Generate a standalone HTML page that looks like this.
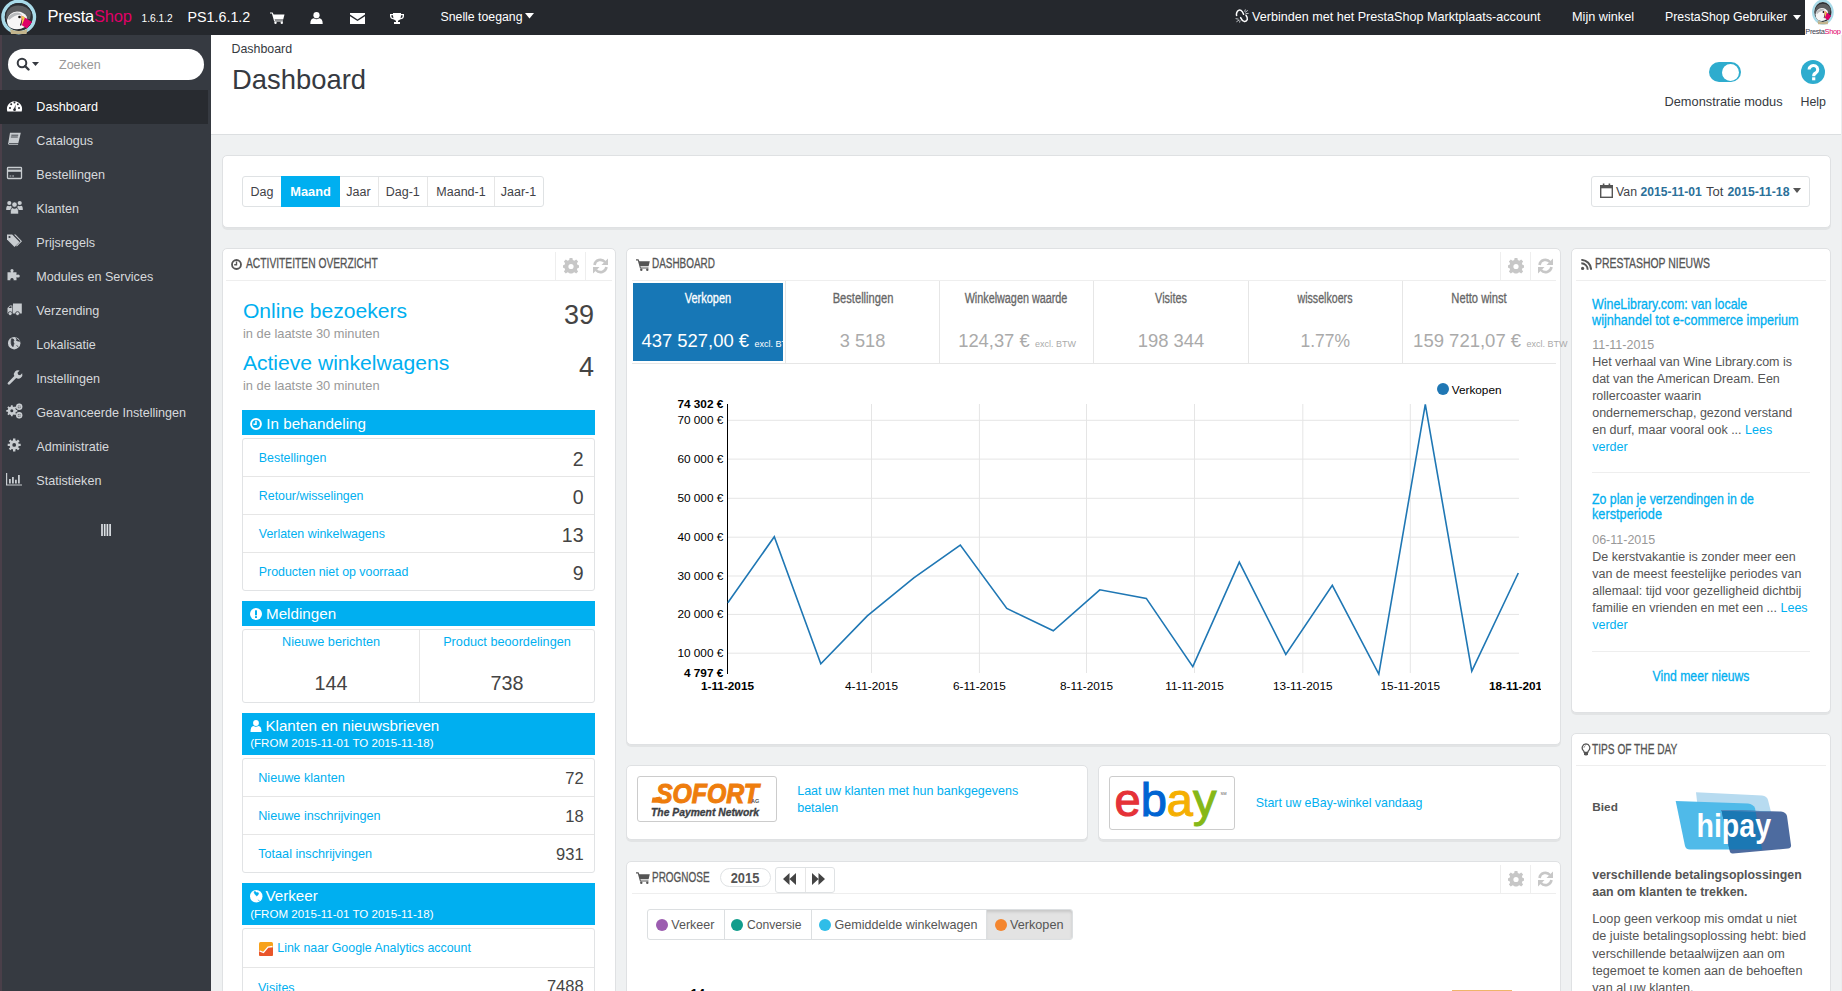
<!DOCTYPE html><html><head><meta charset="utf-8"><title>Dashboard</title><style>*{margin:0;padding:0}
html,body{width:1842px;height:991px;overflow:hidden;background:#eff1f2;font-family:"Liberation Sans", sans-serif;position:relative}
.t{position:absolute;white-space:nowrap}
.b{position:absolute}
</style></head><body>
<div class="b" style="left:0px;top:35px;width:211px;height:956px;background:#363a41;"></div>
<div class="b" style="left:0px;top:35px;width:2px;height:956px;background:#4a3f49;"></div>
<div class="b" style="left:8px;top:49px;width:196px;height:31px;background:#fff;border-radius:16px;"></div>
<svg class="b" style="left:16px;top:57px" width="26" height="14" viewBox="0 0 26 14"><circle cx="6" cy="6" r="4.3" stroke="#363a41" stroke-width="2" fill="none"/><path d="M9 9 L12.5 12.5" stroke="#363a41" stroke-width="2.4" stroke-linecap="round"/><path d="M16 5 H23 L19.5 9Z" fill="#363a41"/></svg>
<div class="t" style="top:57.00px;font-size:12.5px;line-height:16px;color:#999;left:59px;">Zoeken</div>
<div class="b" style="left:0px;top:90px;width:208px;height:34px;background:#282b30;"></div>
<div class="t" style="top:99.00px;font-size:12.6px;line-height:16px;color:#fff;left:36.3px;">Dashboard</div>
<div class="t" style="top:133.00px;font-size:12.6px;line-height:16px;color:#d6d9dc;left:36.3px;">Catalogus</div>
<div class="t" style="top:167.00px;font-size:12.6px;line-height:16px;color:#d6d9dc;left:36.3px;">Bestellingen</div>
<div class="t" style="top:201.00px;font-size:12.6px;line-height:16px;color:#d6d9dc;left:36.3px;">Klanten</div>
<div class="t" style="top:235.00px;font-size:12.6px;line-height:16px;color:#d6d9dc;left:36.3px;">Prijsregels</div>
<div class="t" style="top:269.00px;font-size:12.6px;line-height:16px;color:#d6d9dc;left:36.3px;">Modules en Services</div>
<div class="t" style="top:303.00px;font-size:12.6px;line-height:16px;color:#d6d9dc;left:36.3px;">Verzending</div>
<div class="t" style="top:337.00px;font-size:12.6px;line-height:16px;color:#d6d9dc;left:36.3px;">Lokalisatie</div>
<div class="t" style="top:371.00px;font-size:12.6px;line-height:16px;color:#d6d9dc;left:36.3px;">Instellingen</div>
<div class="t" style="top:405.00px;font-size:12.6px;line-height:16px;color:#d6d9dc;left:36.3px;">Geavanceerde Instellingen</div>
<div class="t" style="top:439.00px;font-size:12.6px;line-height:16px;color:#d6d9dc;left:36.3px;">Administratie</div>
<div class="t" style="top:473.00px;font-size:12.6px;line-height:16px;color:#d6d9dc;left:36.3px;">Statistieken</div>
<svg class="b" style="left:0;top:90px" width="30" height="410" viewBox="0 0 30 410" fill="#c8ccd0">
<g>
<path d="M7.3 21.4 A7.6 7.6 0 1 1 21.7 21.4Z" fill="#fff"/>
<circle cx="10" cy="18" r="1" fill="#282b30"/><circle cx="11.2" cy="14.2" r="1" fill="#282b30"/><circle cx="14.5" cy="12.6" r="1" fill="#282b30"/><circle cx="17.8" cy="14.2" r="1" fill="#282b30"/><circle cx="19" cy="18" r="1" fill="#282b30"/>
<path d="M13.6 20 L15.6 14.5 L15.4 20.5Z" fill="#282b30"/><circle cx="14.5" cy="19.8" r="1.3" fill="#282b30"/>
</g>
<g transform="translate(0,34)">
<path d="M10 8.8 H20.8 L18.3 19.2 H9.2 Q8.2 19.2 8.4 18.2Z"/>
<path d="M8 18.6 Q7.6 20.8 9.3 20.8 H18 L18.2 20 H9.4 Q8.7 20 8.9 19Z"/>
<path d="M11.3 11.2 H18.2 M10.9 13 H17.8" stroke="#363a41" stroke-width="0.9"/>
</g>
<g transform="translate(0,68)">
<rect x="7.5" y="9.5" width="14" height="11" rx="0.8" fill="none" stroke="#c8ccd0" stroke-width="1.3"/><rect x="7.5" y="11.6" width="14" height="2.2"/><path d="M9.5 18 H11.3 M12.2 18 H14" stroke="#c8ccd0" stroke-width="0.9"/>
</g>
<g transform="translate(0,102)">
<circle cx="9.3" cy="11" r="2.1"/><circle cx="19.7" cy="11" r="2.1"/>
<path d="M6.2 18 Q6 13.8 8 13.7 Q9.3 14.6 10.6 13.7 L12 15 Q10.8 16 10.6 18Z M22.8 18 Q23 13.8 21 13.7 Q19.7 14.6 18.4 13.7 L17 15 Q18.2 16 18.4 18Z"/>
<circle cx="14.5" cy="12.6" r="2.6" stroke="#363a41" stroke-width="0.6"/>
<path d="M10.5 22 Q10.3 16 12.3 15.8 Q14.5 17.3 16.7 15.8 Q18.7 16 18.5 22Z" stroke="#363a41" stroke-width="0.6"/>
</g>
<g transform="translate(0,136)">
<path d="M7 8.6 H12.2 L19.5 15.9 L14.5 20.9 L7 13.5Z"/><circle cx="9.5" cy="11" r="1.1" fill="#363a41"/>
<path d="M14 8.6 H15.5 L22 15.2 L16.8 20.5 L16.1 19.8 L20.6 15.2Z"/>
</g>
<g transform="translate(0,170)">
<path d="M7.5 12.3 H11.2 Q10.4 11.6 10.4 10.5 A1.6 1.6 0 0 1 13.6 10.5 Q13.6 11.6 12.8 12.3 H16.5 V15 Q17.1 14.4 18.2 14.4 A1.6 1.6 0 0 1 18.2 17.6 Q17.1 17.6 16.5 17 V20.3 H13.5 Q14 19.5 13.4 18.8 A1.6 1.6 0 0 0 10.6 18.8 Q10 19.5 10.5 20.3 H7.5Z"/>
</g>
<g transform="translate(0,204)">
<path d="M13 9.5 H21.8 V19.5 H13Z"/><path d="M7.5 14 L10 11.5 H12.4 V19.5 H7.5Z"/><path d="M8.5 14 L10.3 12.3 H11.5 V14Z" fill="#363a41"/>
<circle cx="10.2" cy="19.6" r="2" stroke="#363a41" stroke-width="0.8"/><circle cx="17.5" cy="19.6" r="2" stroke="#363a41" stroke-width="0.8"/>
</g>
<g transform="translate(0,238)">
<circle cx="14.2" cy="15.2" r="6.2"/>
<path d="M11.5 10.8 Q13.5 10.5 14 12.2 Q12.5 13.8 14 15.5 L13 18.8 Q10.2 16.5 11.5 10.8Z M15.8 9.6 Q17.5 11.5 16.5 12.5 Q18.5 13.5 20.3 13.2 M16.5 17 L18.5 19.5" fill="#363a41" stroke="#363a41" stroke-width="0.7"/>
</g>
<g transform="translate(0,272)">
<path d="M8 20.4 L14.3 14.1 A4.1 4.1 0 0 1 19.6 8.6 L17.5 10.8 L18.2 12.8 L20.1 13.3 L22.2 11.2 A4.1 4.1 0 0 1 16.2 16 L9.9 22.3 A1.34 1.34 0 0 1 8 20.4Z"/>
</g>
<g transform="translate(0,306)">
<path d="M11.6 10.5 L13 10.9 L13.6 12.6 L15 12.7 L15.3 14.1 L14.5 15.3 L15.4 16.8 L14.6 18 L13 17.8 L12 19 L10.6 18.8 L10.2 17.3 L8.6 16.8 L8.3 15.4 L9.3 14.3 L8.8 12.8 L9.8 11.8 L11.1 12.4Z"/>
<circle cx="11.8" cy="14.8" r="4.2"/><circle cx="11.8" cy="14.8" r="1.5" fill="#363a41"/>
<circle cx="19.2" cy="10.8" r="2.4" fill="none" stroke="#c8ccd0" stroke-width="1.6"/>
<circle cx="19.2" cy="19.3" r="2.4" fill="none" stroke="#c8ccd0" stroke-width="1.6"/>
<path d="M19.2 7.8 V13.8 M16.2 10.8 H22.2 M19.2 16.3 V22.3 M16.2 19.3 H22.2" stroke="#c8ccd0" stroke-width="0.9"/>
<path d="M11.8 9.3 V20.3 M6.3 14.8 H17.3 M7.9 10.9 L15.7 18.7 M15.7 10.9 L7.9 18.7" stroke="#c8ccd0" stroke-width="1.8"/><circle cx="11.8" cy="14.8" r="1.5" fill="#363a41"/>
</g>
<g transform="translate(0,340)">
<circle cx="14.2" cy="14.9" r="4.6"/><path d="M14.2 8.4 V21.4 M7.7 14.9 H20.7 M9.6 10.3 L18.8 19.5 M18.8 10.3 L9.6 19.5" stroke="#c8ccd0" stroke-width="2.4"/><circle cx="14.2" cy="14.9" r="1.9" fill="#363a41"/>
</g>
<g transform="translate(0,374)">
<path d="M6.6 9 V21 H22" stroke="#c8ccd0" stroke-width="1.2" fill="none"/><path d="M9 15 H10.8 V19.6 H9Z M12 13 H13.8 V19.6 H12Z M15 15.8 H16.8 V19.6 H15Z M18 11 H19.8 V19.6 H18Z"/>
</g>
</svg>
<svg class="b" style="left:101px;top:524px" width="11" height="12" viewBox="0 0 11 12"><path d="M1 0 V12 M3.7 0 V12 M6.4 0 V12 M9.1 0 V12" stroke="#dde1e5" stroke-width="1.7"/></svg>
<div class="b" style="left:0px;top:0px;width:1842px;height:35px;background:#25282d;"></div>
<svg class="b" style="left:0;top:0" width="40" height="36" viewBox="0 0 40 36">
<circle cx="18.7" cy="17" r="15.7" fill="none" stroke="#a9dbe9" stroke-width="3.6"/>
<circle cx="18.7" cy="17" r="13.9" fill="#2c2f33"/>
<path d="M6 18 Q6 6 18 5.5 Q28 5.5 31 13 L30 19 L7 21 Z" fill="#5c5e60"/>
<path d="M7 20 Q9 12 17 11.5 Q24 11.5 27 17 L25 27 Q18 31 11 28 Q6.5 25 7 20Z" fill="#f6f6f6"/>
<path d="M8 18 Q11 12.5 18 12.5 Q21 13 22 15 Q16 14 9 20Z" fill="#b9bcbe"/>
<circle cx="19.5" cy="17" r="1.3" fill="#111"/>
<path d="M21.5 15.5 L32 22 L27 28.5 L21.5 25Z" fill="#df0067"/>
<path d="M21.5 15.5 L25 17.6 L22 25Z" fill="#f2c94c"/>
<path d="M20 25 L22.5 18 L21 26Z" fill="#111"/>
<path d="M10 29 Q18.7 33 27.5 29 L26.5 34 L11 34Z" fill="#c2b48c"/>
</svg>
<div class="t" style="top:6.00px;font-size:16.5px;line-height:21px;color:#fff;left:47.5px;letter-spacing:-0.2px;">Presta<span style="color:#df0067">Shop</span></div>
<div class="t" style="top:12.00px;font-size:10.2px;line-height:13px;color:#fff;left:141.5px;">1.6.1.2</div>
<div class="t" style="top:8.00px;font-size:14.3px;line-height:18px;color:#fff;left:187.5px;">PS1.6.1.2</div>
<svg class="b" style="left:270px;top:12px" width="15" height="12" viewBox="0 0 15 12"><path d="M0 0.5 H2.6 L3.6 2.5 H14.5 L13.2 7.5 H4.6 L5 8.6 H13 V9.6 H4.2 L1.9 1.5 H0Z" fill="#fff"/><circle cx="5.5" cy="10.8" r="1.2" fill="#fff"/><circle cx="11.8" cy="10.8" r="1.2" fill="#fff"/></svg>
<svg class="b" style="left:310px;top:12px" width="13" height="12" viewBox="0 0 13 12"><circle cx="6.5" cy="3.2" r="3.1" fill="#fff"/><path d="M0.3 12 Q0.3 6.5 3.8 6.3 Q6.5 8 9.2 6.3 Q12.7 6.5 12.7 12Z" fill="#fff"/></svg>
<svg class="b" style="left:350px;top:13px" width="15" height="11" viewBox="0 0 15 11"><path d="M0 0 H15 V1.6 L7.5 6.5 L0 1.6Z" fill="#fff"/><path d="M0 3.2 L7.5 8 L15 3.2 V11 H0Z" fill="#fff"/></svg>
<svg class="b" style="left:390px;top:13px" width="14" height="11" viewBox="0 0 14 11"><path d="M3 0 H11 V1 H14 V3 Q14 6 10 6.5 Q9 7.5 8 7.8 V9 H10 V11 H4 V9 H6 V7.8 Q5 7.5 4 6.5 Q0 6 0 3 V1 H3Z M1.3 2.2 V3 Q1.3 5 3.5 5.2 Q3 3.8 3 2.2Z M12.7 2.2 H11 Q11 3.8 10.5 5.2 Q12.7 5 12.7 3Z" fill="#fff" fill-rule="evenodd"/></svg>
<div class="t" style="top:10.00px;font-size:12.3px;line-height:15px;color:#fff;left:440.5px;">Snelle toegang</div>
<svg class="b" style="left:525px;top:13px" width="9" height="6" viewBox="0 0 9 6"><path d="M0 0 H9 L4.5 5.5Z" fill="#fff"/></svg>
<svg class="b" style="left:1235px;top:8.8px" width="14" height="14" viewBox="0 0 14 14"><path d="M1.6 6.4 Q1 4.5 2.5 2.2 Q4 0.3 6 1.3 Q7.6 2.3 8.6 5.2" stroke="#fff" stroke-width="1.5" fill="none" stroke-linecap="round"/><path d="M5.6 8.6 Q7 11.8 9.2 12.4 Q11.5 12.8 12.3 10.6 Q12.8 8.5 11 6.2" stroke="#fff" stroke-width="1.5" fill="none" stroke-linecap="round"/><path d="M10 3.4 L12.8 1.4 M10.6 4.6 L13.6 4.4 M9.6 2.6 L10.4 0.4 M3.6 10.2 L0.6 9.6 M4.2 11 L1.4 12.8 M5 11.4 L4.6 13.6" stroke="#cfd2d6" stroke-width="0.9"/></svg>
<div class="t" style="top:9.00px;font-size:12.6px;line-height:16px;color:#fff;left:1252px;">Verbinden met het PrestaShop Marktplaats-account</div>
<div class="t" style="top:9.00px;font-size:12.7px;line-height:16px;color:#fff;left:1572px;">Mijn winkel</div>
<div class="t" style="top:10.00px;font-size:12.35px;line-height:15px;color:#fff;left:1665px;">PrestaShop Gebruiker</div>
<svg class="b" style="left:1793px;top:15px" width="8" height="5" viewBox="0 0 8 5"><path d="M0 0 H8 L4 5Z" fill="#fff"/></svg>
<div class="b" style="left:1805px;top:0px;width:37px;height:35px;background:#fff;"></div>
<svg class="b" style="left:1805px;top:0" width="36" height="27" viewBox="0 0 36 27"><g transform="translate(6.3,-0.2) scale(0.62,0.72)">
<circle cx="18.7" cy="17" r="15.7" fill="none" stroke="#a9dbe9" stroke-width="3.6"/>
<circle cx="18.7" cy="17" r="13.9" fill="#2c2f33"/>
<path d="M6 18 Q6 6 18 5.5 Q28 5.5 31 13 L30 19 L7 21 Z" fill="#5c5e60"/>
<path d="M7 20 Q9 12 17 11.5 Q24 11.5 27 17 L25 27 Q18 31 11 28 Q6.5 25 7 20Z" fill="#f6f6f6"/>
<path d="M8 18 Q11 12.5 18 12.5 Q21 13 22 15 Q16 14 9 20Z" fill="#b9bcbe"/>
<circle cx="19.5" cy="17" r="1.3" fill="#111"/>
<path d="M21.5 15.5 L32 22 L27 28.5 L21.5 25Z" fill="#df0067"/>
<path d="M21.5 15.5 L25 17.6 L22 25Z" fill="#f2c94c"/>
<path d="M20 25 L22.5 18 L21 26Z" fill="#111"/>
<path d="M10 29 Q18.7 33 27.5 29 L26.5 34 L11 34Z" fill="#c2b48c"/>
</g></svg>
<div class="t" style="top:27.00px;font-size:7.4px;line-height:9px;color:#3a3c50;left:1805.3px;letter-spacing:-0.35px;">Presta<span style="color:#df0067">Shop</span></div>
<div class="b" style="left:211px;top:35px;width:1630px;height:100px;background:#fff;border-bottom:1px solid #dcdfe1;box-sizing:border-box;"></div>
<div class="b" style="left:1841px;top:35px;width:1px;height:956px;background:#ebedee;"></div>
<div class="t" style="top:41.00px;font-size:12.4px;line-height:16px;color:#363a41;left:231.5px;">Dashboard</div>
<div class="t" style="top:63.00px;font-size:27.4px;line-height:34px;color:#363a41;left:232px;">Dashboard</div>
<div class="b" style="left:1709px;top:62px;width:32px;height:20px;background:#2eacce;border-radius:10px;"></div>
<div class="b" style="left:1722.3px;top:63.5px;width:17px;height:17px;background:#fff;border-radius:50%;"></div>
<svg class="b" style="left:1801px;top:60px" width="24" height="24" viewBox="0 0 24 24"><circle cx="12" cy="12" r="12" fill="#2eacce"/><path d="M8.1 9.6 A4.3 4.1 0 1 1 14.8 13 Q12.7 14 12.7 16.2" stroke="#fff" stroke-width="3.1" fill="none"/><rect x="11.1" y="17.3" width="3.2" height="3" fill="#fff"/></svg>
<div class="t" style="top:94.00px;font-size:12.8px;line-height:16px;color:#363a41;left:1664.5px;">Demonstratie modus</div>
<div class="t" style="top:94.00px;font-size:12.4px;line-height:16px;color:#363a41;left:1800.5px;">Help</div>
<div class="b" style="left:222px;top:155px;width:1609px;height:73px;background:#fff;border:1px solid #dfe1e3;border-radius:5px;box-shadow:0 2px 0 rgba(0,0,0,0.05);box-sizing:border-box;"></div>
<div class="b" style="left:242px;top:176px;width:302px;height:31px;border:1px solid #dfe2e4;border-radius:3px;box-sizing:border-box;background:#fff;"></div>
<div class="b" style="left:281px;top:176px;width:59px;height:31px;background:#00aff0;"></div>
<div class="b" style="left:378px;top:177px;width:1px;height:29px;background:#e6e6e6;"></div>
<div class="b" style="left:427px;top:177px;width:1px;height:29px;background:#e6e6e6;"></div>
<div class="b" style="left:494px;top:177px;width:1px;height:29px;background:#e6e6e6;"></div>
<div class="t" style="top:184.00px;font-size:12.5px;line-height:16px;color:#3f4247;left:-138px;width:800px;text-align:center;">Dag</div>
<div class="t" style="top:184.00px;font-size:12.8px;line-height:16px;color:#fff;font-weight:bold;left:-89.5px;width:800px;text-align:center;">Maand</div>
<div class="t" style="top:184.00px;font-size:12.5px;line-height:16px;color:#3f4247;left:-41.5px;width:800px;text-align:center;">Jaar</div>
<div class="t" style="top:184.00px;font-size:12.5px;line-height:16px;color:#3f4247;left:2.8000000000000114px;width:800px;text-align:center;">Dag-1</div>
<div class="t" style="top:184.00px;font-size:12.5px;line-height:16px;color:#3f4247;left:61px;width:800px;text-align:center;">Maand-1</div>
<div class="t" style="top:184.00px;font-size:12.5px;line-height:16px;color:#3f4247;left:118.5px;width:800px;text-align:center;">Jaar-1</div>
<div class="b" style="left:1591px;top:176px;width:219px;height:31px;border:1px solid #dfe2e4;border-radius:3px;box-sizing:border-box;background:#fff;"></div>
<svg class="b" style="left:1600px;top:183px" width="13" height="15" viewBox="0 0 13 15"><rect x="0.7" y="2.7" width="11.6" height="11.6" fill="none" stroke="#555" stroke-width="1.4"/><rect x="0.7" y="2.7" width="11.6" height="2.6" fill="#555"/><rect x="2.8" y="0.5" width="1.6" height="3.5" fill="#555"/><rect x="8.6" y="0.5" width="1.6" height="3.5" fill="#555"/></svg>
<div class="t" style="top:185.00px;font-size:12.3px;line-height:15px;color:#3f4247;left:1616px;">Van</div>
<div class="t" style="top:185.00px;font-size:12.1px;line-height:15px;color:#2b7099;font-weight:bold;left:1640.6px;">2015-11-01</div>
<div class="t" style="top:184.00px;font-size:13.0px;line-height:16px;color:#3f4247;left:1706px;">Tot</div>
<div class="t" style="top:185.00px;font-size:12.25px;line-height:15px;color:#2b7099;font-weight:bold;left:1727.5px;">2015-11-18</div>
<svg class="b" style="left:1793px;top:188px" width="8" height="5" viewBox="0 0 8 5"><path d="M0 0 H8 L4 5Z" fill="#555"/></svg>
<div class="b" style="left:222px;top:248px;width:394px;height:762px;background:#fff;border:1px solid #dfe1e3;border-radius:5px;box-shadow:0 2px 0 rgba(0,0,0,0.05);box-sizing:border-box;"></div>
<svg class="b" style="left:231px;top:259px" width="11" height="11" viewBox="0 0 12 12"><circle cx="6" cy="6" r="4.9" stroke="#555" stroke-width="2" fill="none"/><path d="M6 2.8 V6.3 H3.5" stroke="#555" stroke-width="1.5" fill="none"/></svg>
<div class="t" style="top:254.00px;font-size:14px;line-height:18px;color:#555;left:245.9px;transform:scaleX(0.733);transform-origin:0 0;-webkit-text-stroke-width:0.3px;">ACTIVITEITEN OVERZICHT</div>
<div class="b" style="left:554.5px;top:252px;width:1px;height:28px;background:#eee;"></div>
<div class="b" style="left:584.5px;top:252px;width:1px;height:28px;background:#eee;"></div>
<svg class="b" style="left:562.5px;top:258.0px" width="16" height="16" viewBox="0 0 16 16"><path d="M6.6 0.5 H9.4 L9.8 2.6 L11.4 3.3 L13.2 2.1 L15.1 4 L13.9 5.8 L14.6 7.4 L16 7.8 V10.2 L14.6 10.6 L13.9 12.2 L15.1 14 L13.2 15.9 L11.4 14.7 L9.8 15.4 L9.4 16 H6.6 L6.2 15.4 L4.6 14.7 L2.8 15.9 L0.9 14 L2.1 12.2 L1.4 10.6 L0 10.2 V7.8 L1.4 7.4 L2.1 5.8 L0.9 4 L2.8 2.1 L4.6 3.3 L6.2 2.6Z" fill="#c7c7c7" transform="translate(0,-0.5)"/><circle cx="8" cy="8.5" r="2.6" fill="#fff"/></svg>
<svg class="b" style="left:591.5px;top:258.0px" width="17" height="16" viewBox="0 0 17 16"><path d="M2.5 7 A6 6 0 0 1 13 4" stroke="#c7c7c7" stroke-width="2.6" fill="none"/><path d="M16 0.5 V7 H9.5Z" fill="#c7c7c7"/><path d="M14.5 9 A6 6 0 0 1 4 12" stroke="#c7c7c7" stroke-width="2.6" fill="none"/><path d="M1 15.5 V9 H7.5Z" fill="#c7c7c7"/></svg>
<div class="b" style="left:226px;top:280px;width:386px;height:1px;background:#eee;"></div>
<div class="t" style="top:298.00px;font-size:21.1px;line-height:26px;color:#00aff0;left:242.9px;">Online bezoekers</div>
<div class="t" style="top:298.00px;font-size:27px;line-height:34px;color:#444;right:1248px;">39</div>
<div class="t" style="top:326.00px;font-size:12.86px;line-height:16px;color:#999;left:243px;">in de laatste 30 minuten</div>
<div class="t" style="top:350.00px;font-size:21.1px;line-height:26px;color:#00aff0;left:242.9px;">Actieve winkelwagens</div>
<div class="t" style="top:350.00px;font-size:27px;line-height:34px;color:#444;right:1248px;">4</div>
<div class="t" style="top:378.00px;font-size:12.86px;line-height:16px;color:#999;left:243px;">in de laatste 30 minuten</div>
<div class="b" style="left:242px;top:410px;width:353px;height:25px;background:#00aff0;"></div>
<svg class="b" style="left:250px;top:418px" width="12" height="12" viewBox="0 0 12 12"><circle cx="6" cy="6" r="4.9" stroke="#fff" stroke-width="2" fill="none"/><path d="M6 2.8 V6.3 H3.5" stroke="#fff" stroke-width="1.5" fill="none"/></svg>
<div class="t" style="top:414.00px;font-size:15.2px;line-height:19px;color:#fff;left:266.3px;">In behandeling</div>
<div class="b" style="left:242px;top:438px;width:353px;height:153px;border:1px solid #e1e3e5;border-radius:3px;box-sizing:border-box;background:#fff;"></div>
<div class="b" style="left:243px;top:476px;width:351px;height:1px;background:#e6e6e6;"></div>
<div class="b" style="left:243px;top:514px;width:351px;height:1px;background:#e6e6e6;"></div>
<div class="b" style="left:243px;top:552px;width:351px;height:1px;background:#e6e6e6;"></div>
<div class="t" style="top:450.00px;font-size:12.4px;line-height:16px;color:#00aff0;left:258.8px;">Bestellingen</div>
<div class="t" style="top:447.00px;font-size:19.5px;line-height:24px;color:#444;right:1258.5px;">2</div>
<div class="t" style="top:488.00px;font-size:12.4px;line-height:16px;color:#00aff0;left:258.8px;">Retour/wisselingen</div>
<div class="t" style="top:485.00px;font-size:19.5px;line-height:24px;color:#444;right:1258.5px;">0</div>
<div class="t" style="top:526.00px;font-size:12.4px;line-height:16px;color:#00aff0;left:258.8px;">Verlaten winkelwagens</div>
<div class="t" style="top:523.00px;font-size:19.5px;line-height:24px;color:#444;right:1258.5px;">13</div>
<div class="t" style="top:564.00px;font-size:12.4px;line-height:16px;color:#00aff0;left:258.8px;">Producten niet op voorraad</div>
<div class="t" style="top:561.00px;font-size:19.5px;line-height:24px;color:#444;right:1258.5px;">9</div>
<div class="b" style="left:242px;top:601px;width:353px;height:25px;background:#00aff0;"></div>
<svg class="b" style="left:250px;top:608px" width="12" height="12" viewBox="0 0 12 12"><circle cx="6" cy="6" r="6" fill="#fff"/><rect x="5" y="2.3" width="2" height="5" fill="#00aff0"/><rect x="5" y="8.2" width="2" height="1.8" fill="#00aff0"/></svg>
<div class="t" style="top:604.00px;font-size:15.2px;line-height:19px;color:#fff;left:266px;">Meldingen</div>
<div class="b" style="left:242px;top:629px;width:353px;height:74px;border:1px solid #e1e3e5;border-radius:3px;box-sizing:border-box;background:#fff;"></div>
<div class="b" style="left:419px;top:630px;width:1px;height:72px;background:#e6e6e6;"></div>
<div class="t" style="top:634.00px;font-size:12.7px;line-height:16px;color:#00aff0;left:-69px;width:800px;text-align:center;">Nieuwe berichten</div>
<div class="t" style="top:634.00px;font-size:12.7px;line-height:16px;color:#00aff0;left:107px;width:800px;text-align:center;">Product beoordelingen</div>
<div class="t" style="top:671.00px;font-size:19.8px;line-height:25px;color:#444;left:-69px;width:800px;text-align:center;">144</div>
<div class="t" style="top:671.00px;font-size:19.8px;line-height:25px;color:#444;left:107px;width:800px;text-align:center;">738</div>
<div class="b" style="left:242px;top:713px;width:353px;height:42px;background:#00aff0;"></div>
<svg class="b" style="left:250px;top:720px" width="12" height="12" viewBox="0 0 12 12"><circle cx="6" cy="3" r="2.9" fill="#fff"/><path d="M0.5 12 Q0.5 6.2 3.5 6 Q6 7.6 8.5 6 Q11.5 6.2 11.5 12Z" fill="#fff"/></svg>
<div class="t" style="top:716.00px;font-size:15.2px;line-height:19px;color:#fff;left:265.4px;">Klanten en nieuwsbrieven</div>
<div class="t" style="top:736.00px;font-size:11.55px;line-height:14px;color:#fff;left:250.2px;">(FROM 2015-11-01 TO 2015-11-18)</div>
<div class="b" style="left:242px;top:758px;width:353px;height:115px;border:1px solid #e1e3e5;border-radius:3px;box-sizing:border-box;background:#fff;"></div>
<div class="b" style="left:243px;top:796px;width:351px;height:1px;background:#e6e6e6;"></div>
<div class="b" style="left:243px;top:834px;width:351px;height:1px;background:#e6e6e6;"></div>
<div class="t" style="top:770.00px;font-size:12.67px;line-height:16px;color:#00aff0;left:258.2px;">Nieuwe klanten</div>
<div class="t" style="top:768.00px;font-size:16.5px;line-height:21px;color:#444;right:1258.4px;">72</div>
<div class="t" style="top:808.00px;font-size:12.67px;line-height:16px;color:#00aff0;left:258.2px;">Nieuwe inschrijvingen</div>
<div class="t" style="top:806.00px;font-size:16.5px;line-height:21px;color:#444;right:1258.4px;">18</div>
<div class="t" style="top:846.00px;font-size:12.67px;line-height:16px;color:#00aff0;left:258.2px;">Totaal inschrijvingen</div>
<div class="t" style="top:844.00px;font-size:16.5px;line-height:21px;color:#444;right:1258.4px;">931</div>
<div class="b" style="left:242px;top:883px;width:353px;height:42px;background:#00aff0;"></div>
<svg class="b" style="left:250px;top:890px" width="12.5" height="12.5" viewBox="0 0 12 12"><circle cx="6" cy="6" r="6" fill="#fff"/><path d="M4 1.6 Q5.6 1.2 6.2 2.6 Q7.4 2 8.2 2.8 Q8.2 4.5 6.5 5.8 Q5.2 5 4.6 3.6 Q3.8 2.8 4 1.6Z M7.5 9.5 L9.3 10.6" fill="#00aff0" stroke="#00aff0" stroke-width="0.6"/></svg>
<div class="t" style="top:886.00px;font-size:15.2px;line-height:19px;color:#fff;left:265.4px;">Verkeer</div>
<div class="t" style="top:907.00px;font-size:11.55px;line-height:14px;color:#fff;left:250.2px;">(FROM 2015-11-01 TO 2015-11-18)</div>
<div class="b" style="left:242px;top:928px;width:353px;height:79px;border:1px solid #e1e3e5;border-radius:3px;box-sizing:border-box;background:#fff;"></div>
<div class="b" style="left:243px;top:967px;width:351px;height:1px;background:#e6e6e6;"></div>
<svg class="b" style="left:259px;top:942px" width="14" height="14" viewBox="0 0 14 14"><rect x="0" y="0" width="14" height="14" rx="1.5" fill="#f7a21b"/><path d="M0 8 L4.5 10 L9 5 L14 5.5 V12.5 Q14 14 12.5 14 H1.5 Q0 14 0 12.5Z" fill="#e9552b"/><path d="M0.5 8.8 L4.5 10.5 L9 5.2 L13.5 4.5" stroke="#fff" stroke-width="1.3" fill="none"/></svg>
<div class="t" style="top:940.00px;font-size:12.4px;line-height:16px;color:#00aff0;left:277.3px;">Link naar Google Analytics account</div>
<div class="t" style="top:980.00px;font-size:12.5px;line-height:16px;color:#00aff0;left:258px;">Visites</div>
<div class="t" style="top:976.00px;font-size:16.5px;line-height:21px;color:#444;right:1258.4px;">7488</div>
<div class="b" style="left:626px;top:248px;width:935px;height:497px;background:#fff;border:1px solid #dfe1e3;border-radius:5px;box-shadow:0 2px 0 rgba(0,0,0,0.05);box-sizing:border-box;"></div>
<svg class="b" style="left:636px;top:259px" width="14" height="12" viewBox="0 0 14 12"><path d="M0 0.3 H2.5 L3.4 2.3 H13.8 L12.6 7.3 H4.4 L4.8 8.4 H12.5 V9.6 H4 L1.8 1.4 H0Z" fill="#555"/><circle cx="5.3" cy="10.8" r="1.2" fill="#555"/><circle cx="11.3" cy="10.8" r="1.2" fill="#555"/></svg>
<div class="t" style="top:254.00px;font-size:14px;line-height:18px;color:#555;left:651.5px;transform:scaleX(0.71);transform-origin:0 0;-webkit-text-stroke-width:0.3px;">DASHBOARD</div>
<div class="b" style="left:1500.4px;top:252px;width:1px;height:28px;background:#eee;"></div>
<div class="b" style="left:1530.4px;top:252px;width:1px;height:28px;background:#eee;"></div>
<svg class="b" style="left:1508.4px;top:258.0px" width="16" height="16" viewBox="0 0 16 16"><path d="M6.6 0.5 H9.4 L9.8 2.6 L11.4 3.3 L13.2 2.1 L15.1 4 L13.9 5.8 L14.6 7.4 L16 7.8 V10.2 L14.6 10.6 L13.9 12.2 L15.1 14 L13.2 15.9 L11.4 14.7 L9.8 15.4 L9.4 16 H6.6 L6.2 15.4 L4.6 14.7 L2.8 15.9 L0.9 14 L2.1 12.2 L1.4 10.6 L0 10.2 V7.8 L1.4 7.4 L2.1 5.8 L0.9 4 L2.8 2.1 L4.6 3.3 L6.2 2.6Z" fill="#c7c7c7" transform="translate(0,-0.5)"/><circle cx="8" cy="8.5" r="2.6" fill="#fff"/></svg>
<svg class="b" style="left:1537.4px;top:258.0px" width="17" height="16" viewBox="0 0 17 16"><path d="M2.5 7 A6 6 0 0 1 13 4" stroke="#c7c7c7" stroke-width="2.6" fill="none"/><path d="M16 0.5 V7 H9.5Z" fill="#c7c7c7"/><path d="M14.5 9 A6 6 0 0 1 4 12" stroke="#c7c7c7" stroke-width="2.6" fill="none"/><path d="M1 15.5 V9 H7.5Z" fill="#c7c7c7"/></svg>
<div class="b" style="left:632px;top:280px;width:924px;height:1px;background:#eee;"></div>
<div class="b" style="left:633px;top:283px;width:150px;height:78px;background:#1777b6;"></div>
<div class="b" style="left:785px;top:281px;width:1px;height:82px;background:#e6e6e6;"></div>
<div class="b" style="left:939px;top:281px;width:1px;height:82px;background:#e6e6e6;"></div>
<div class="b" style="left:1093px;top:281px;width:1px;height:82px;background:#e6e6e6;"></div>
<div class="b" style="left:1248px;top:281px;width:1px;height:82px;background:#e6e6e6;"></div>
<div class="b" style="left:1402px;top:281px;width:1px;height:82px;background:#e6e6e6;"></div>
<div class="b" style="left:632px;top:363px;width:924px;height:1px;background:#e6e6e6;"></div>
<div class="t" style="top:289.00px;font-size:14px;line-height:18px;color:#fff;left:308px;width:800px;text-align:center;transform:scaleX(0.784);transform-origin:50% 0;-webkit-text-stroke-width:0.3px;">Verkopen</div>
<div class="t" style="top:289.00px;font-size:14px;line-height:18px;color:#666;left:462.5px;width:800px;text-align:center;transform:scaleX(0.796);transform-origin:50% 0;-webkit-text-stroke-width:0.3px;">Bestellingen</div>
<div class="t" style="top:289.00px;font-size:14px;line-height:18px;color:#666;left:616px;width:800px;text-align:center;transform:scaleX(0.772);transform-origin:50% 0;-webkit-text-stroke-width:0.3px;">Winkelwagen waarde</div>
<div class="t" style="top:289.00px;font-size:14px;line-height:18px;color:#666;left:771px;width:800px;text-align:center;transform:scaleX(0.776);transform-origin:50% 0;-webkit-text-stroke-width:0.3px;">Visites</div>
<div class="t" style="top:289.00px;font-size:14px;line-height:18px;color:#666;left:925px;width:800px;text-align:center;transform:scaleX(0.76);transform-origin:50% 0;-webkit-text-stroke-width:0.3px;">wisselkoers</div>
<div class="t" style="top:289.00px;font-size:14px;line-height:18px;color:#666;left:1079px;width:800px;text-align:center;transform:scaleX(0.799);transform-origin:50% 0;-webkit-text-stroke-width:0.3px;">Netto winst</div>
<div class="t" style="top:329.00px;font-size:18.45px;line-height:23px;color:#fff;left:641.4px;">437 527,00 €</div>
<div class="b" style="left:633px;top:330px;width:150px;height:25px;overflow:hidden;"></div>
<div class="b" style="left:633px;top:330px;width:150px;height:25px;overflow:hidden"><div class="t" style="left:121.5px;top:8.5px;font-size:9px;line-height:11px;color:#fff">excl. BTW</div></div>
<div class="t" style="top:330.00px;font-size:18.2px;line-height:23px;color:#aaa;left:462.5px;width:800px;text-align:center;">3 518</div>
<div class="t" style="top:329.00px;font-size:18.35px;line-height:23px;color:#aaa;left:958.2px;">124,37 €</div>
<div class="t" style="top:339.00px;font-size:9px;line-height:11px;color:#aaa;left:1035px;">excl. BTW</div>
<div class="t" style="top:329.00px;font-size:18.4px;line-height:23px;color:#aaa;left:771px;width:800px;text-align:center;">198 344</div>
<div class="t" style="top:330.00px;font-size:17.5px;line-height:22px;color:#aaa;left:925.3px;width:800px;text-align:center;">1.77%</div>
<div class="t" style="top:329.00px;font-size:18.5px;line-height:23px;color:#aaa;left:1413.1px;">159 721,07 €</div>
<div class="t" style="top:339.00px;font-size:9px;line-height:11px;color:#aaa;left:1526.5px;">excl. BTW</div>
<svg class="b" style="left:0;top:0" width="1842" height="991"><line x1="728" y1="420.3" x2="1519" y2="420.3" stroke="#e5e5e5" stroke-width="1"/><line x1="728" y1="459.1" x2="1519" y2="459.1" stroke="#e5e5e5" stroke-width="1"/><line x1="728" y1="498.3" x2="1519" y2="498.3" stroke="#e5e5e5" stroke-width="1"/><line x1="728" y1="537.2" x2="1519" y2="537.2" stroke="#e5e5e5" stroke-width="1"/><line x1="728" y1="576" x2="1519" y2="576" stroke="#e5e5e5" stroke-width="1"/><line x1="728" y1="614.4" x2="1519" y2="614.4" stroke="#e5e5e5" stroke-width="1"/><line x1="728" y1="653.2" x2="1519" y2="653.2" stroke="#e5e5e5" stroke-width="1"/><line x1="871.5" y1="404" x2="871.5" y2="673" stroke="#e5e5e5" stroke-width="1"/><line x1="979.4" y1="404" x2="979.4" y2="673" stroke="#e5e5e5" stroke-width="1"/><line x1="1086.5" y1="404" x2="1086.5" y2="673" stroke="#e5e5e5" stroke-width="1"/><line x1="1194.5" y1="404" x2="1194.5" y2="673" stroke="#e5e5e5" stroke-width="1"/><line x1="1302.8" y1="404" x2="1302.8" y2="673" stroke="#e5e5e5" stroke-width="1"/><line x1="1410.3" y1="404" x2="1410.3" y2="673" stroke="#e5e5e5" stroke-width="1"/><line x1="727.5" y1="404" x2="727.5" y2="674" stroke="#000" stroke-width="1"/><polyline points="727.8,602.8 774.3,536.8 820.8,663.7 867.3,615.9 913.8,577.8 960.3,545.0 1006.8,608.4 1053.3,630.8 1099.8,589.8 1146.3,598.4 1192.8,666.7 1239.3,562.2 1285.8,654.4 1332.3,585.3 1378.8,674.1 1425.3,404.3 1471.8,671.2 1518.3,573.0" fill="none" stroke="#1f77b4" stroke-width="1.6" stroke-linejoin="miter"/><circle cx="1443" cy="389" r="6" fill="#1f77b4"/></svg>
<div class="t" style="top:383.00px;font-size:11.8px;line-height:15px;color:#000;left:1451.7px;">Verkopen</div>
<div class="t" style="top:397.00px;font-size:11.8px;line-height:15px;color:#000;font-weight:bold;right:1118.7px;">74 302 €</div>
<div class="t" style="top:413.00px;font-size:11.8px;line-height:15px;color:#000;right:1118.7px;">70 000 €</div>
<div class="t" style="top:452.00px;font-size:11.8px;line-height:15px;color:#000;right:1118.7px;">60 000 €</div>
<div class="t" style="top:491.00px;font-size:11.8px;line-height:15px;color:#000;right:1118.7px;">50 000 €</div>
<div class="t" style="top:530.00px;font-size:11.8px;line-height:15px;color:#000;right:1118.7px;">40 000 €</div>
<div class="t" style="top:569.00px;font-size:11.8px;line-height:15px;color:#000;right:1118.7px;">30 000 €</div>
<div class="t" style="top:607.00px;font-size:11.8px;line-height:15px;color:#000;right:1118.7px;">20 000 €</div>
<div class="t" style="top:646.00px;font-size:11.8px;line-height:15px;color:#000;right:1118.7px;">10 000 €</div>
<div class="t" style="top:666.00px;font-size:11.8px;line-height:15px;color:#000;font-weight:bold;right:1118.7px;">4 797 €</div>
<div class="t" style="top:679.00px;font-size:11.8px;line-height:15px;color:#000;font-weight:bold;left:327.5px;width:800px;text-align:center;">1-11-2015</div>
<div class="t" style="top:679.00px;font-size:11.8px;line-height:15px;color:#000;left:471.5px;width:800px;text-align:center;">4-11-2015</div>
<div class="t" style="top:679.00px;font-size:11.8px;line-height:15px;color:#000;left:579.4px;width:800px;text-align:center;">6-11-2015</div>
<div class="t" style="top:679.00px;font-size:11.8px;line-height:15px;color:#000;left:686.5px;width:800px;text-align:center;">8-11-2015</div>
<div class="t" style="top:679.00px;font-size:11.8px;line-height:15px;color:#000;left:794.5px;width:800px;text-align:center;">11-11-2015</div>
<div class="t" style="top:679.00px;font-size:11.8px;line-height:15px;color:#000;left:902.8px;width:800px;text-align:center;">13-11-2015</div>
<div class="t" style="top:679.00px;font-size:11.8px;line-height:15px;color:#000;left:1010.3px;width:800px;text-align:center;">15-11-2015</div>
<div class="b" style="left:1480px;top:678px;width:61px;height:16px;overflow:hidden"><div class="t" style="left:9px;top:1px;font-size:11.8px;line-height:14.75px;color:#000;font-weight:bold">18-11-2015</div></div>
<div class="b" style="left:1571px;top:248px;width:260px;height:465px;background:#fff;border:1px solid #dfe1e3;border-radius:5px;box-shadow:0 2px 0 rgba(0,0,0,0.05);box-sizing:border-box;"></div>
<svg class="b" style="left:1580.5px;top:258.5px" width="11" height="11" viewBox="0 0 11 11"><circle cx="1.6" cy="9.4" r="1.6" fill="#555"/><path d="M0.3 4.3 A6.4 6.4 0 0 1 6.7 10.7" stroke="#555" stroke-width="1.9" fill="none"/><path d="M0.3 0.9 A9.8 9.8 0 0 1 10.1 10.7" stroke="#555" stroke-width="1.9" fill="none"/></svg>
<div class="t" style="top:254.00px;font-size:14px;line-height:18px;color:#555;left:1595.4px;transform:scaleX(0.745);transform-origin:0 0;-webkit-text-stroke-width:0.3px;">PRESTASHOP NIEUWS</div>
<div class="b" style="left:1576px;top:280px;width:250px;height:1px;background:#eee;"></div>
<div class="t" style="top:294.00px;font-size:15px;line-height:19px;color:#00aff0;left:1592.2px;transform:scaleX(0.829);transform-origin:0 0;-webkit-text-stroke-width:0.3px;">WineLibrary.com: van locale</div>
<div class="t" style="top:310.00px;font-size:15px;line-height:19px;color:#00aff0;left:1592.2px;transform:scaleX(0.843);transform-origin:0 0;-webkit-text-stroke-width:0.3px;">wijnhandel tot e-commerce imperium</div>
<div class="t" style="top:337.00px;font-size:12.5px;line-height:16px;color:#999;left:1592.2px;">11-11-2015</div>
<div class="t" style="top:354.00px;font-size:12.5px;line-height:16px;color:#555;left:1592.2px;">Het verhaal van Wine Library.com is</div>
<div class="t" style="top:371.00px;font-size:12.5px;line-height:16px;color:#555;left:1592.2px;">dat van the American Dream. Een</div>
<div class="t" style="top:388.00px;font-size:12.5px;line-height:16px;color:#555;left:1592.2px;">rollercoaster waarin</div>
<div class="t" style="top:405.00px;font-size:12.5px;line-height:16px;color:#555;left:1592.2px;">ondernemerschap, gezond verstand</div>
<div class="t" style="top:422.00px;font-size:12.5px;line-height:16px;color:#555;left:1592.2px;">en durf, maar vooral ook ... <span style="color:#00aff0">Lees</span></div>
<div class="t" style="top:439.00px;font-size:12.5px;line-height:16px;color:#555;left:1592.2px;"><span style="color:#00aff0">verder</span></div>
<div class="b" style="left:1592px;top:472px;width:218px;height:1px;background:#eee;"></div>
<div class="t" style="top:489.00px;font-size:15px;line-height:19px;color:#00aff0;left:1592.2px;transform:scaleX(0.823);transform-origin:0 0;-webkit-text-stroke-width:0.3px;">Zo plan je verzendingen in de</div>
<div class="t" style="top:504.00px;font-size:15px;line-height:19px;color:#00aff0;left:1592.2px;transform:scaleX(0.848);transform-origin:0 0;-webkit-text-stroke-width:0.3px;">kerstperiode</div>
<div class="t" style="top:532.00px;font-size:12.5px;line-height:16px;color:#999;left:1592.2px;">06-11-2015</div>
<div class="t" style="top:549.00px;font-size:12.5px;line-height:16px;color:#555;left:1592.2px;">De kerstvakantie is zonder meer een</div>
<div class="t" style="top:566.00px;font-size:12.5px;line-height:16px;color:#555;left:1592.2px;">van de meest feestelijke periodes van</div>
<div class="t" style="top:583.00px;font-size:12.5px;line-height:16px;color:#555;left:1592.2px;">allemaal: tijd voor gezelligheid dichtbij</div>
<div class="t" style="top:600.00px;font-size:12.5px;line-height:16px;color:#555;left:1592.2px;">familie en vrienden en met een ... <span style="color:#00aff0">Lees</span></div>
<div class="t" style="top:617.00px;font-size:12.5px;line-height:16px;color:#555;left:1592.2px;"><span style="color:#00aff0">verder</span></div>
<div class="b" style="left:1592px;top:650.5px;width:218px;height:1px;background:#eee;"></div>
<div class="t" style="top:666.00px;font-size:15px;line-height:19px;color:#00aff0;left:1301px;width:800px;text-align:center;transform:scaleX(0.815);transform-origin:50% 0;-webkit-text-stroke-width:0.3px;">Vind meer nieuws</div>
<div class="b" style="left:1571px;top:733px;width:260px;height:277px;background:#fff;border:1px solid #dfe1e3;border-radius:5px;box-shadow:0 2px 0 rgba(0,0,0,0.05);box-sizing:border-box;"></div>
<svg class="b" style="left:1580.5px;top:743px" width="10" height="13" viewBox="0 0 10 13"><path d="M5 0.9 A3.9 3.9 0 0 1 7.6 7.6 Q6.9 8.4 6.8 9.3 H3.2 Q3.1 8.4 2.4 7.6 A3.9 3.9 0 0 1 5 0.9Z" stroke="#555" stroke-width="1.3" fill="none"/><path d="M3 9.6 H7 V11.2 Q6.5 12.6 5 12.6 Q3.5 12.6 3 11.2Z" fill="#555"/><path d="M4.6 2.6 Q3 3 2.9 4.8" stroke="#555" stroke-width="0.7" fill="none"/></svg>
<div class="t" style="top:740.00px;font-size:14px;line-height:18px;color:#555;left:1592.3px;transform:scaleX(0.725);transform-origin:0 0;-webkit-text-stroke-width:0.3px;">TIPS OF THE DAY</div>
<div class="b" style="left:1576px;top:765px;width:250px;height:1px;background:#eee;"></div>
<div class="t" style="top:800.00px;font-size:11.8px;line-height:15px;color:#555;font-weight:bold;left:1592.3px;">Bied</div>
<svg class="b" style="left:1670px;top:785px" width="130" height="75" viewBox="0 0 130 75">
<defs><clipPath id="navyc"><path d="M51.5 25 L111 26.5 Q116 27 117 31 L121 60 Q121.5 63 118 63.5 L63 68.5 Q60 68.8 59.5 65Z"/></clipPath></defs>
<path d="M26 7.2 L92 10.5 Q97 11 98 15 L101 27 L28 25Z" fill="#b7dbf0"/>
<path d="M5.7 16 L78 18.5 Q83 19 85 23 L92 64.5 L20 64.5 Q16 64.5 15 61Z" fill="#4fbae9"/>
<path d="M51.5 25 L111 26.5 Q116 27 117 31 L121 60 Q121.5 63 118 63.5 L63 68.5 Q60 68.8 59.5 65Z" fill="#4d6b9f"/>
<path d="M5.7 16 L78 18.5 Q83 19 85 23 L92 64.5 L20 64.5 Q16 64.5 15 61Z" fill="#1b78b4" clip-path="url(#navyc)"/>
<path d="M26 7.2 L92 10.5 Q97 11 98 15 L101 27 L28 25Z" fill="#5c8fc0" clip-path="url(#navyc)"/>
<text x="26.5" y="51.5" font-family="Liberation Sans, sans-serif" font-weight="bold" font-size="34" fill="#fff" textLength="74.5" lengthAdjust="spacingAndGlyphs">hipay</text>
</svg>
<div class="t" style="top:868.00px;font-size:12.36px;line-height:15px;color:#555;font-weight:bold;left:1592.3px;">verschillende betalingsoplossingen</div>
<div class="t" style="top:885.00px;font-size:12.36px;line-height:15px;color:#555;font-weight:bold;left:1592.3px;">aan om klanten te trekken.</div>
<div class="t" style="top:911.00px;font-size:12.65px;line-height:16px;color:#555;left:1592.3px;">Loop geen verkoop mis omdat u niet</div>
<div class="t" style="top:928.00px;font-size:12.65px;line-height:16px;color:#555;left:1592.3px;">de juiste betalingsoplossing hebt: bied</div>
<div class="t" style="top:946.00px;font-size:12.65px;line-height:16px;color:#555;left:1592.3px;">verschillende betaalwijzen aan om</div>
<div class="t" style="top:963.00px;font-size:12.65px;line-height:16px;color:#555;left:1592.3px;">tegemoet te komen aan de behoeften</div>
<div class="t" style="top:980.00px;font-size:12.65px;line-height:16px;color:#555;left:1592.3px;">van al uw klanten.</div>
<div class="b" style="left:626px;top:765px;width:462px;height:75px;background:#fff;border:1px solid #dfe1e3;border-radius:5px;box-shadow:0 2px 0 rgba(0,0,0,0.05);box-sizing:border-box;"></div>
<div class="b" style="left:637px;top:776px;width:140px;height:46px;border:1px solid #ccc;border-radius:3px;box-sizing:border-box;background:#fff;"></div>
<svg class="b" style="left:645px;top:780px" width="124" height="40" viewBox="0 0 124 40">
<text x="11" y="22.8" font-family="Liberation Sans, sans-serif" font-weight="bold" font-style="italic" font-size="28" fill="#ee7d0d" stroke="#ee7d0d" stroke-width="1.1" textLength="103" lengthAdjust="spacingAndGlyphs">SOFORT</text>
<path d="M7.5 17.6 H17 L16 22.8 H6.5Z" fill="#ee7d0d"/>
<text x="106" y="22.8" font-family="Liberation Sans, sans-serif" font-weight="bold" font-size="5.5" fill="#555">AG</text>
<text x="6" y="35.6" font-family="Liberation Sans, sans-serif" font-weight="bold" font-style="italic" font-size="11.5" fill="#3c4044" stroke="#3c4044" stroke-width="0.35" textLength="108" lengthAdjust="spacingAndGlyphs">The Payment Network</text>
</svg>
<div class="t" style="top:783.00px;font-size:12.5px;line-height:16px;color:#00aff0;left:797.2px;">Laat uw klanten met hun bankgegevens</div>
<div class="t" style="top:800.00px;font-size:12.5px;line-height:16px;color:#00aff0;left:797.2px;">betalen</div>
<div class="b" style="left:1098px;top:765px;width:463px;height:75px;background:#fff;border:1px solid #dfe1e3;border-radius:5px;box-shadow:0 2px 0 rgba(0,0,0,0.05);box-sizing:border-box;"></div>
<div class="b" style="left:1109px;top:776px;width:126px;height:54px;border:1px solid #ccc;border-radius:3px;box-sizing:border-box;background:#fff;"></div>
<svg class="b" style="left:1112px;top:779px" width="120" height="48" viewBox="0 0 120 48">
<text x="2.5" y="37" font-family="Liberation Sans, sans-serif" font-size="47" stroke-width="1.1" textLength="102" lengthAdjust="spacingAndGlyphs"><tspan fill="#e53238" stroke="#e53238">e</tspan><tspan fill="#0064d2" stroke="#0064d2">b</tspan><tspan fill="#f5af02" stroke="#f5af02">a</tspan><tspan fill="#86b817" stroke="#86b817">y</tspan></text>
<text x="108.5" y="16" font-family="Liberation Sans, sans-serif" font-size="4" fill="#555">SM</text>
</svg>
<div class="t" style="top:795.00px;font-size:12.4px;line-height:16px;color:#00aff0;left:1255.7px;">Start uw eBay-winkel vandaag</div>
<div class="b" style="left:626px;top:861px;width:935px;height:149px;background:#fff;border:1px solid #dfe1e3;border-radius:5px;box-shadow:0 2px 0 rgba(0,0,0,0.05);box-sizing:border-box;"></div>
<svg class="b" style="left:636px;top:872px" width="14" height="12" viewBox="0 0 14 12"><path d="M0 0.3 H2.5 L3.4 2.3 H13.8 L12.6 7.3 H4.4 L4.8 8.4 H12.5 V9.6 H4 L1.8 1.4 H0Z" fill="#555"/><circle cx="5.3" cy="10.8" r="1.2" fill="#555"/><circle cx="11.3" cy="10.8" r="1.2" fill="#555"/></svg>
<div class="t" style="top:868.00px;font-size:14px;line-height:18px;color:#555;left:652.3px;transform:scaleX(0.712);transform-origin:0 0;-webkit-text-stroke-width:0.3px;">PROGNOSE</div>
<div class="b" style="left:720px;top:868px;width:51px;height:19px;border:1px solid #dfe2e4;border-radius:10px;box-sizing:border-box;"></div>
<div class="t" style="top:869.00px;font-size:14px;line-height:18px;color:#555;font-weight:bold;left:345.20000000000005px;width:800px;text-align:center;transform:scaleX(0.92);transform-origin:50% 0;">2015</div>
<div class="b" style="left:774.5px;top:867px;width:60px;height:26px;border:1px solid #dfe2e4;border-radius:3px;box-sizing:border-box;"></div>
<div class="b" style="left:804.5px;top:868px;width:1px;height:24px;background:#e6e6e6;"></div>
<svg class="b" style="left:783px;top:873px" width="13" height="12" viewBox="0 0 13 12"><path d="M6.5 0 V12 L0 6Z M13 0 V12 L6.5 6Z" fill="#444"/></svg>
<svg class="b" style="left:812px;top:873px" width="13" height="12" viewBox="0 0 13 12"><path d="M0 0 V12 L6.5 6Z M6.5 0 V12 L13 6Z" fill="#444"/></svg>
<div class="b" style="left:1500.4px;top:865px;width:1px;height:28px;background:#eee;"></div>
<div class="b" style="left:1530.4px;top:865px;width:1px;height:28px;background:#eee;"></div>
<svg class="b" style="left:1508.4px;top:871.0px" width="16" height="16" viewBox="0 0 16 16"><path d="M6.6 0.5 H9.4 L9.8 2.6 L11.4 3.3 L13.2 2.1 L15.1 4 L13.9 5.8 L14.6 7.4 L16 7.8 V10.2 L14.6 10.6 L13.9 12.2 L15.1 14 L13.2 15.9 L11.4 14.7 L9.8 15.4 L9.4 16 H6.6 L6.2 15.4 L4.6 14.7 L2.8 15.9 L0.9 14 L2.1 12.2 L1.4 10.6 L0 10.2 V7.8 L1.4 7.4 L2.1 5.8 L0.9 4 L2.8 2.1 L4.6 3.3 L6.2 2.6Z" fill="#c7c7c7" transform="translate(0,-0.5)"/><circle cx="8" cy="8.5" r="2.6" fill="#fff"/></svg>
<svg class="b" style="left:1537.4px;top:871.0px" width="17" height="16" viewBox="0 0 17 16"><path d="M2.5 7 A6 6 0 0 1 13 4" stroke="#c7c7c7" stroke-width="2.6" fill="none"/><path d="M16 0.5 V7 H9.5Z" fill="#c7c7c7"/><path d="M14.5 9 A6 6 0 0 1 4 12" stroke="#c7c7c7" stroke-width="2.6" fill="none"/><path d="M1 15.5 V9 H7.5Z" fill="#c7c7c7"/></svg>
<div class="b" style="left:632px;top:893px;width:924px;height:1px;background:#eee;"></div>
<div class="b" style="left:647px;top:909px;width:426px;height:31px;border:1px solid #dcdfe1;border-radius:3px;box-sizing:border-box;background:#fff;"></div>
<div class="b" style="left:986px;top:910px;width:86px;height:29px;background:#e3e3e3;box-shadow:inset 0 2px 3px rgba(0,0,0,0.12);border-radius:0 2px 2px 0;"></div>
<div class="b" style="left:723.5px;top:910px;width:1px;height:29px;background:#dcdfe1;"></div>
<div class="b" style="left:810.5px;top:910px;width:1px;height:29px;background:#dcdfe1;"></div>
<div class="b" style="left:986px;top:910px;width:1px;height:29px;background:#dcdfe1;"></div>
<div class="b" style="left:656px;top:918.5px;width:12px;height:12px;background:#9c5db0;border-radius:50%;"></div>
<div class="b" style="left:731.3px;top:918.5px;width:12px;height:12px;background:#119d8c;border-radius:50%;"></div>
<div class="b" style="left:819px;top:918.5px;width:12px;height:12px;background:#2fbde8;border-radius:50%;"></div>
<div class="b" style="left:994.8px;top:918.5px;width:12px;height:12px;background:#f4862f;border-radius:50%;"></div>
<div class="t" style="top:917.00px;font-size:12.5px;line-height:16px;color:#555;left:671.3px;">Verkeer</div>
<div class="t" style="top:918.00px;font-size:12.15px;line-height:15px;color:#555;left:746.9px;">Conversie</div>
<div class="t" style="top:917.00px;font-size:12.55px;line-height:16px;color:#555;left:834.5px;">Gemiddelde winkelwagen</div>
<div class="t" style="top:917.00px;font-size:12.66px;line-height:16px;color:#555;left:1010px;">Verkopen</div>
<div class="t" style="top:986.00px;font-size:13px;line-height:16px;color:#000;font-weight:bold;right:1137px;">14</div>
<div class="b" style="left:1452px;top:990px;width:60px;height:1px;background:#efb56a;"></div>
</body></html>
